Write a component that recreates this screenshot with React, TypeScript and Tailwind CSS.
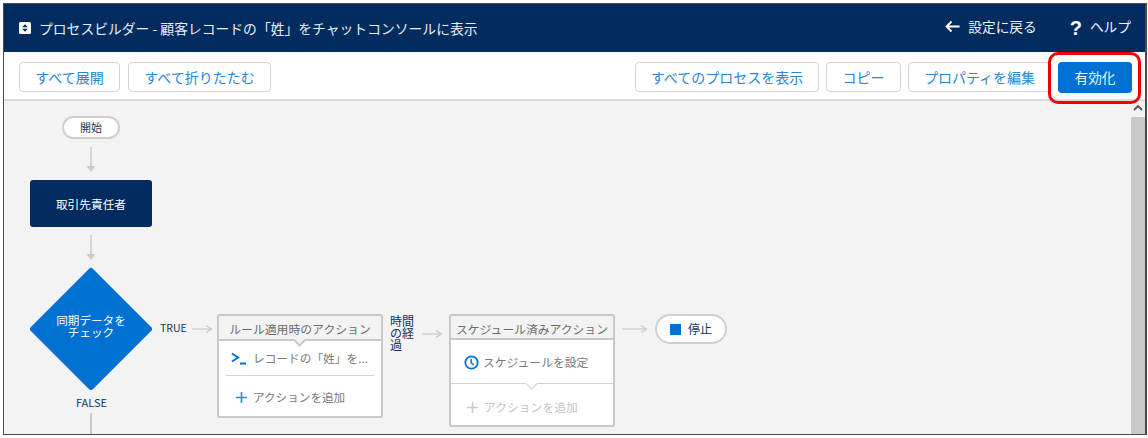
import React from "react";

const font = { fontFamily: '"Noto Sans CJK JP", "Noto Sans", sans-serif' };

function Btn({ children, className = "" }: { children: React.ReactNode; className?: string }) {
  return (
    <div className={"h-[30px] flex items-center justify-center bg-white border border-[#d4d4d4] rounded-[4px] text-[14px] text-[#2b84d8] " + className}>
      {children}
    </div>
  );
}

function ArrowDown({ className }: { className: string }) {
  return (
    <svg className={"absolute " + className} width="10" height="26" viewBox="0 0 10 26">
      <path d="M5 0V20" stroke="#c9c9c9" strokeWidth="1.5" />
      <path d="M0.5 19H9.5L5 25Z" fill="#c9c9c9" />
    </svg>
  );
}

function ArrowRight({ className, w = 20 }: { className: string; w?: number }) {
  return (
    <svg className={"absolute " + className} width={w} height="10" viewBox={`0 0 ${w} 10`}>
      <path d={`M0 5H${w - 1}`} stroke="#c9c9c9" strokeWidth="1.2" />
      <path d={`M${w - 6} 1.5L${w - 0.5} 5L${w - 6} 8.5`} fill="none" stroke="#c9c9c9" strokeWidth="1.2" />
    </svg>
  );
}

export default function App() {
  return (
    <div className="relative w-[1148px] h-[438px] bg-white pt-[3px] pl-[3px] pr-[1px] pb-[3px] overflow-hidden" style={font}>
      <div className="w-full h-full border border-[#4a4a4a] border-r-2 flex flex-col overflow-hidden">
        <header className="h-[48px] shrink-0 bg-[#022c60] flex items-center pl-[15px] pr-[14px] text-white">
          <svg width="12" height="12" viewBox="0 0 12 12" className="shrink-0 mr-[8px]">
            <rect width="12" height="12" rx="1.5" fill="#fff" />
            <path d="M6 2.2L8.8 5.2H3.2Z M3.2 6.8H8.8L6 9.8Z" fill="#022c60" />
          </svg>
          <span className="text-[13.8px] text-[#e8edf4]">プロセスビルダー - 顧客レコードの「姓」をチャットコンソールに表示</span>
          <div className="ml-auto flex items-center -mt-[3px] text-[13.7px] text-[#eef2f7]">
            <svg width="15" height="13" viewBox="0 0 15 13" className="mr-[8px]">
              <path d="M14.5 6.5H1.5M6.5 1.5L1.5 6.5L6.5 11.5" fill="none" stroke="#fff" strokeWidth="1.8" />
            </svg>
            <span>設定に戻る</span>
            <span className="ml-[33px] mr-[8px] mt-[2px] text-[20px] font-bold leading-none text-white" style={{ fontFamily: '"Liberation Sans", sans-serif' }}>?</span>
            <span>ヘルプ</span>
          </div>
        </header>

        <div className="h-[49px] shrink-0 bg-white border-b-2 border-[#dcdcdc] flex items-start pt-[10px] pl-[15px] pr-[13px]">
          <Btn className="w-[101px]">すべて展開</Btn>
          <Btn className="w-[143px] ml-[8px]">すべて折りたたむ</Btn>
          <Btn className="w-[184px] ml-auto">すべてのプロセスを表示</Btn>
          <Btn className="w-[75px] ml-[7px]">コピー</Btn>
          <Btn className="w-[143px] ml-[7px]">プロパティを編集</Btn>
          <div className="w-[74px] h-[31px] ml-[7px] flex items-center justify-center rounded-[4px] bg-[#0070d2] text-[#eef6fd] text-[13.7px]">有効化</div>
        </div>

        <main className="relative flex-1 bg-[#f3f3f3] overflow-hidden">
          {/* scrollbar */}
          <div className="absolute right-0 top-0 bottom-0 w-[14px] flex flex-col items-center">
            <svg width="10" height="8" viewBox="0 0 10 8" className="mt-[3px]">
              <path d="M1 6L5 2L9 6" fill="none" stroke="#555" strokeWidth="1.8" />
            </svg>
            <div className="w-full flex-1 mt-[5px] bg-[#c9c9c9]" />
          </div>

          {/* 開始 */}
          <div className="absolute left-[58px] top-[15px] w-[58px] h-[23px] rounded-full bg-white border-2 border-[#cfcfcf] flex items-center justify-center text-[11px] text-[#16325c]">開始</div>
          <ArrowDown className="left-[82px] top-[46px]" />

          {/* 取引先責任者 */}
          <div className="absolute left-[26px] top-[79px] w-[122px] h-[47px] rounded-[3px] bg-[#022c60] flex items-center justify-center text-[11.7px] text-white">取引先責任者</div>
          <ArrowDown className="left-[82px] top-[134px]" />

          {/* diamond */}
          <div className="absolute left-[26px] top-[167px] w-[122px] h-[122px] flex items-center justify-center">
            <div className="absolute left-[17px] top-[17px] w-[88px] h-[88px] rotate-45 rounded-[3px] bg-[#0070d2]" />
            <div className="relative -mt-[6px] text-center text-[11.6px] leading-[12px] text-white">
              同期データを<br />チェック
            </div>
          </div>

          <span className="absolute left-[156px] top-[219px] text-[10.5px] leading-[16px] text-[#16325c]">TRUE</span>
          <ArrowRight className="left-[188px] top-[223px]" />
          <span className="absolute left-[72px] top-[293px] text-[11px] leading-[16px] text-[#16325c]">FALSE</span>
          <div className="absolute left-[86px] top-[312px] w-[2px] h-[24px] bg-[#c9c9c9]" />

          {/* rule actions */}
          <div className="absolute left-[213px] top-[213px] w-[166px] h-[104px] rounded-[3px] border-2 border-[#c9c9c9] bg-white">
            <div className="relative h-[25px] pt-[3px] bg-[#f3f3f3] border-b-2 border-[#c9c9c9] flex items-center justify-center text-[11.85px] whitespace-nowrap text-[#6b6b6b]">
              ルール適用時のアクション
              <div className="absolute left-1/2 -bottom-[6px] -ml-[5px] w-[9px] h-[9px] rotate-45 bg-[#f3f3f3] border-r-2 border-b-2 border-[#c9c9c9]" />
            </div>
            <div className="h-[35px] mx-[7px] border-b border-[#d0d0d0] flex items-center pl-[5px] text-[11.7px] text-[#7a7a7a]">
              <svg width="15" height="13" viewBox="0 0 15 13" className="mr-[7px] shrink-0">
                <path d="M1 1.5L7 5.5L1 9.5" fill="none" stroke="#0070d2" strokeWidth="2" />
                <path d="M9 11.5H15" stroke="#0070d2" strokeWidth="2" />
              </svg>
              レコードの「姓」を...
            </div>
            <div className="h-[38px] pt-[5px] flex items-center pl-[16px] text-[11.6px] text-[#7a7a7a]">
              <svg width="13" height="13" viewBox="0 0 13 13" className="mr-[5px]">
                <path d="M6.5 1V12M1 6.5H12" stroke="#2c87db" strokeWidth="1.6" />
              </svg>
              アクションを追加
            </div>
          </div>

          <div className="absolute left-[386px] top-[214px] w-[25px] text-[12px] leading-[12px] text-[#16325c]">時間の経過</div>
          <ArrowRight className="left-[418px] top-[228px]" />

          {/* scheduled */}
          <div className="absolute left-[445px] top-[213px] w-[166px] h-[113px] rounded-[3px] border-2 border-[#c9c9c9] bg-white">
            <div className="h-[24px] pt-[4px] bg-[#f3f3f3] border-b-2 border-[#c9c9c9] flex items-center justify-center text-[11.8px] whitespace-nowrap text-[#6b6b6b]">スケジュール済みアクション</div>
            <div className="relative h-[44px] pt-[1px] border-b border-[#d0d0d0] flex items-center pl-[13px] text-[11.8px] text-[#7a7a7a]">
              <svg width="15" height="15" viewBox="0 0 15 15" className="mr-[4px]">
                <circle cx="7.5" cy="7.5" r="6.2" fill="none" stroke="#0070d2" strokeWidth="1.8" />
                <path d="M7.2 3.8V7.8L10 10" fill="none" stroke="#0070d2" strokeWidth="1.5" />
              </svg>
              スケジュールを設定
              <div className="absolute left-1/2 -bottom-[5px] -ml-[5px] w-[9px] h-[9px] rotate-45 bg-white border-r border-b border-[#d0d0d0]" />
            </div>
            <div className="h-[41px] pt-[5px] flex items-center pl-[15px] text-[11.8px] text-[#c4c4c4]">
              <svg width="13" height="13" viewBox="0 0 13 13" className="mr-[5px]">
                <path d="M6.5 1V12M1 6.5H12" stroke="#c9c9c9" strokeWidth="1.6" />
              </svg>
              アクションを追加
            </div>
          </div>

          <ArrowRight className="left-[618px] top-[223px]" w={25} />

          {/* stop */}
          <div className="absolute left-[651px] top-[213px] w-[72px] h-[30px] rounded-full bg-white border-2 border-[#cfcfcf] flex items-center justify-center text-[12px] text-[#16325c]">
            <span className="w-[11px] h-[11px] bg-[#0070d2] mr-[7px]" />
            停止
          </div>
        </main>
      </div>

      {/* red highlight */}
      <div className="absolute left-[1048px] top-[52px] w-[93px] h-[52px] rounded-[10px] border-[3px] border-[#f00000]" />
    </div>
  );
}
